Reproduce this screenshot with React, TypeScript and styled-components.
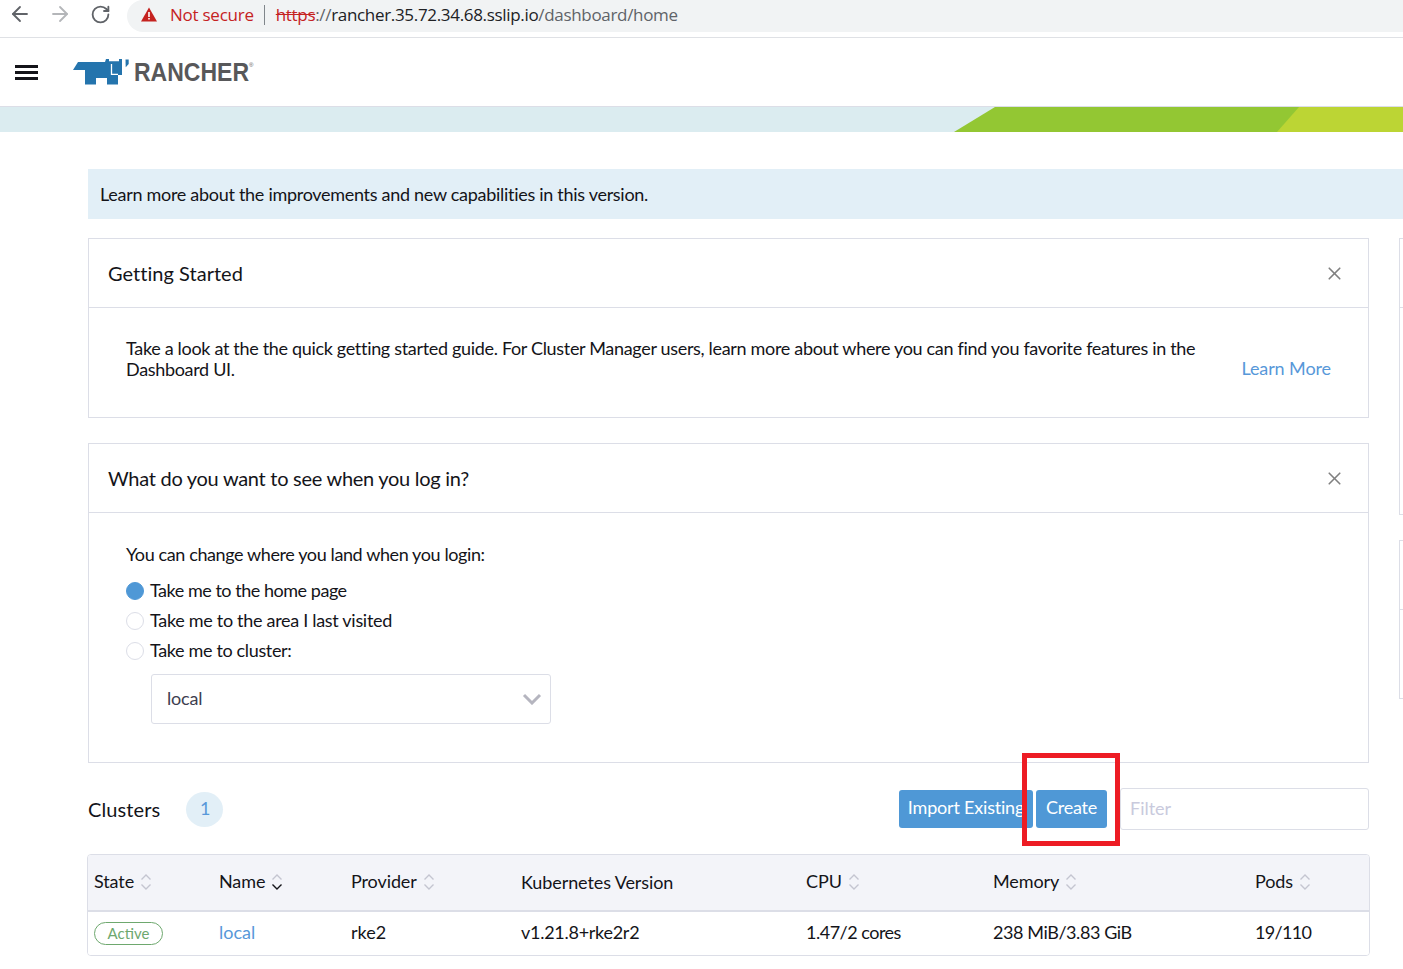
import React from "react";
import styled, { createGlobalStyle } from "styled-components";
import { ArrowLeft, ArrowRight, RotateCw, X } from "lucide-react";

const GlobalStyle = createGlobalStyle`
  html, body {
    margin: 0;
    padding: 0;
    background: #fff;
    overflow: hidden;
  }
  body {
    font-family: Lato, "Open Sans", sans-serif;
    color: #141419;
  }
  * {
    box-sizing: border-box;
  }
`;

const Page = styled.div`
  position: relative;
  width: 1403px;
  height: 969px;
  overflow: hidden;
`;

const BrowserBar = styled.div`
  height: 38px;
  display: flex;
  align-items: flex-start;
  border-bottom: 1px solid #dfe1e5;
  padding-left: 8px;
`;

const NavButton = styled.span<{ $muted?: boolean }>`
  width: 24px;
  height: 28px;
  margin-right: 16px;
  display: flex;
  align-items: center;
  justify-content: center;
  color: ${({ $muted }) => ($muted ? "#b4b6b9" : "#606368")};
`;

const Omnibox = styled.div`
  flex: 1;
  height: 32px;
  margin-left: -1px;
  display: flex;
  align-items: center;
  padding: 0 0 3px 14px;
  background: #f1f3f4;
  border-radius: 16px 0 0 16px;
  font-family: "Open Sans", "Noto Sans", sans-serif;
  font-size: 17px;
  letter-spacing: -0.25px;
  white-space: nowrap;
`;

const NotSecure = styled.span`
  color: #c5221f;
  margin-left: 13px;
`;

const OmniDivider = styled.span`
  width: 1px;
  height: 20px;
  background: #80868b;
  margin: 0 11px 0 10px;
`;

const UrlText = styled.span`
  letter-spacing: -0.32px;
`;

const Scheme = styled.span`
  color: #c5221f;
  text-decoration: line-through;
`;

const Host = styled.span`
  color: #202124;
`;

const UrlPath = styled.span`
  color: #5f6368;
`;

const TopHeader = styled.header`
  height: 69px;
  display: flex;
  align-items: center;
  border-bottom: 1px solid #dcdee7;
  padding-left: 15px;
`;

const Burger = styled.div`
  width: 23px;
  height: 15px;
  margin-right: 35px;
  display: flex;
  flex-direction: column;
  justify-content: space-between;

  span {
    display: block;
    height: 3px;
    background: #141419;
  }
`;

const Logo = styled.div`
  display: flex;
  align-items: center;
  color: #58585a;
`;

const LogoText = styled.span`
  display: inline-block;
  width: 115px;
  margin-left: 3px;
  font-family: "Liberation Sans", Arial, sans-serif;
  font-weight: 700;
  font-size: 26px;
  line-height: 30px;
  white-space: nowrap;
  transform: scaleX(0.885);
  transform-origin: left center;
`;

const LogoMark = styled.sup`
  font-family: "Liberation Sans", Arial, sans-serif;
  font-size: 6px;
  margin: -14px 0 0 0;
`;

const Banner = styled.div`
  position: relative;
  height: 25px;
  background: #dbecf0;
  overflow: hidden;
`;

const BannerShape = styled.div<{ $left: number; $color: string }>`
  position: absolute;
  top: 0;
  bottom: 0;
  right: 0;
  left: ${({ $left }) => $left}px;
  background: ${({ $color }) => $color};
  clip-path: polygon(41px 0, 100% 0, 100% 100%, 0 100%);
`;

const BannerTip = styled(BannerShape)`
  clip-path: polygon(22px 0, 100% 0, 100% 100%, 0 100%);
`;

const Main = styled.main`
  padding: 37px 0 0 88px;
`;

const Notice = styled.div`
  height: 50px;
  display: flex;
  align-items: center;
  padding-left: 12px;
  background: #e2eff7;
  font-size: 18px;
  letter-spacing: -0.29px;
`;

const Columns = styled.div`
  display: flex;
  margin-top: 19px;
  gap: 30px;
`;

const LeftColumn = styled.div`
  flex: none;
  width: 1281px;
`;

const RightColumn = styled.div`
  flex: none;
  width: 100px;
`;

const Card = styled.section<{ $height: number; $gap?: number }>`
  height: ${({ $height }) => $height}px;
  margin-top: ${({ $gap }) => $gap ?? 0}px;
  border: 1px solid #dcdee7;
  display: flex;
  flex-direction: column;
`;

const CardHeader = styled.div<{ $tracking: number }>`
  flex: none;
  height: 69px;
  display: flex;
  align-items: center;
  justify-content: space-between;
  padding: 0 23px 0 19px;
  border-bottom: 1px solid #dcdee7;
  font-size: 20px;
  letter-spacing: ${({ $tracking }) => $tracking}px;
  color: #141419;

  svg {
    color: #808080;
    margin-top: 1px;
  }
`;

const GuideBody = styled.div`
  flex: 1;
  display: flex;
  align-items: center;
  justify-content: space-between;
  padding: 0 37px;
  font-size: 18px;
  letter-spacing: -0.32px;
`;

const GuideText = styled.p`
  margin: 0 0 8px;
  width: 1085px;
  line-height: 21px;
`;

const LearnMore = styled.a`
  color: #5798d9;
  text-decoration: none;
  letter-spacing: -0.1px;
  margin-top: 11px;
`;

const LoginBody = styled.div`
  padding: 31px 37px 0;
  font-size: 18px;
`;

const LoginPrompt = styled.p`
  margin: 0 0 10px;
  line-height: 21px;
  letter-spacing: -0.39px;
`;

const RadioRow = styled.div<{ $tracking: number }>`
  height: 30px;
  display: flex;
  align-items: center;
  gap: 6px;
  letter-spacing: ${({ $tracking }) => $tracking}px;
`;

const RadioDot = styled.span<{ $checked?: boolean }>`
  flex: none;
  width: 18px;
  height: 18px;
  margin-top: 2px;
  border-radius: 50%;
  background: ${({ $checked }) => ($checked ? "#4f98d6" : "#fff")};
  border: 1px solid ${({ $checked }) => ($checked ? "#4f98d6" : "#dcdee7")};
`;

const SelectBox = styled.div`
  width: 400px;
  height: 50px;
  margin: 9px 0 0 25px;
  padding: 0 8px 3px 15px;
  display: flex;
  align-items: center;
  justify-content: space-between;
  border: 1px solid #dcdee7;
  border-radius: 3px;
  color: #3e3e50;
  letter-spacing: -0.2px;

  svg {
    margin-top: 3px;
  }
`;

const SideCard = styled.div<{ $height: number; $head: number; $gap?: number }>`
  height: ${({ $height }) => $height}px;
  margin-top: ${({ $gap }) => $gap ?? 0}px;
  border: 1px solid #dcdee7;
  border-right: none;

  &::before {
    content: "";
    display: block;
    height: ${({ $head }) => $head}px;
    border-bottom: 1px solid #dcdee7;
  }
`;

const ClusterBar = styled.div`
  display: flex;
  align-items: center;
  height: 42px;
  margin-top: 25px;
`;

const ClusterTitle = styled.h2`
  margin: 0 26px 0 0;
  font-size: 20px;
  font-weight: 400;
  letter-spacing: 0.1px;
`;

const CountBadge = styled.span`
  width: 37px;
  height: 35px;
  border-radius: 50%;
  display: flex;
  align-items: center;
  justify-content: center;
  background: #e2eff7;
  color: #5798d9;
  font-size: 18px;
  padding: 0 0 2px 1px;
`;

const BarActions = styled.div`
  margin-left: auto;
  display: flex;
  align-items: center;
`;

const ActionButton = styled.button<{ $width: number; $gap: number }>`
  width: ${({ $width }) => $width}px;
  height: 38px;
  margin-right: ${({ $gap }) => $gap}px;
  padding: 0 0 5px;
  border: none;
  border-radius: 3px;
  background: #4f98d6;
  color: #fff;
  font-family: inherit;
  font-size: 18px;
  letter-spacing: -0.2px;
  white-space: nowrap;
`;

const FilterBox = styled.div`
  width: 249px;
  height: 42px;
  padding: 0 9px 2px;
  display: flex;
  align-items: center;
  border: 1px solid #dcdee7;
  border-radius: 3px;
  color: #c9cadd;
  font-size: 18px;
`;

const Table = styled.div`
  width: 1283px;
  margin: 24px 0 0 -1px;
  border: 1px solid #dcdee7;
  border-radius: 4px;
  overflow: hidden;
`;

const TableRow = styled.div<{ $head?: boolean }>`
  display: grid;
  grid-template-columns: 125px 132px 170px 285px 187px 262px 1fr;
  align-items: center;
  height: ${({ $head }) => ($head ? "57px" : "43px")};
  padding: ${({ $head }) => ($head ? "0 0 4px 6px" : "0 0 3px 6px")};
  font-size: 18px;
  letter-spacing: ${({ $head }) => ($head ? "-0.1px" : "-0.42px")};
  background: ${({ $head }) => ($head ? "#f3f4f9" : "#fff")};
  border-bottom: ${({ $head }) => ($head ? "2px solid #dcdee7" : "none")};
`;

const HeadCell = styled.div<{ $drop?: boolean }>`
  display: flex;
  align-items: center;
  gap: 6px;
  padding-top: ${({ $drop }) => ($drop ? "3px" : "0")};
`;

const BodyCell = styled.div<{ $tracking?: number }>`
  letter-spacing: ${({ $tracking }) => $tracking ?? -0.42}px;
`;

const SortIcon = styled.svg`
  flex: none;
  margin-top: 2px;
`;

const NameLink = styled.a`
  color: #5798d9;
  text-decoration: none;
  letter-spacing: 0;
`;

const StatePill = styled.span`
  display: inline-flex;
  align-items: center;
  justify-content: center;
  width: 69px;
  height: 23px;
  margin-top: 3px;
  padding-bottom: 2px;
  border: 1px solid #6ea86e;
  border-radius: 12px;
  color: #6ea86e;
  font-size: 15px;
  letter-spacing: 0;
`;

const Callout = styled.div`
  position: absolute;
  left: 1022px;
  top: 753px;
  width: 98px;
  height: 93px;
  border: 5px solid #ed1c24;
  pointer-events: none;
`;

const Sort = ({ active }: { active?: boolean }) => (
  <SortIcon width="12" height="18" viewBox="0 0 12 18" fill="none" strokeWidth="1.4">
    <path d="M1.5 6.5 6 2l4.5 4.5" stroke="#c4c5d0" />
    <path d="M1.5 11.5 6 16l4.5-4.5" stroke={active ? "#141419" : "#c4c5d0"} />
  </SortIcon>
);

const RancherMark = () => (
  <svg width="58" height="26" viewBox="0 0 58 26">
    <path
      fill="#2474ad"
      d="M0 11 5 3H32L33 0h3v2.200h10V0h3v16h-4v9.500H34V19H23v6.500H12V11z"
    />
    <path fill="none" stroke="#fff" strokeWidth="1.300" d="M38.500 5v10.300H45" />
    <path fill="#2474ad" d="M52.500 0.500h3.200V5l-3 3.200z" />
  </svg>
);

const App = () => {
  return (
    <Page>
      <GlobalStyle />
      <BrowserBar>
        <NavButton>
          <ArrowLeft size={24} strokeWidth={1.8} />
        </NavButton>
        <NavButton $muted>
          <ArrowRight size={24} strokeWidth={1.8} />
        </NavButton>
        <NavButton>
          <RotateCw size={21} strokeWidth={2.1} />
        </NavButton>
        <Omnibox>
          <svg width="16" height="15" viewBox="0 0 16 15">
            <path fill="#c5221f" d="M8 0.500 16 14.500H0z" />
            <path fill="#fff" d="M7.200 5h1.600v5H7.200zM7.200 11h1.600v1.600H7.200z" />
          </svg>
          <NotSecure>Not secure</NotSecure>
          <OmniDivider />
          <UrlText>
            <Scheme>https</Scheme>
            <UrlPath>://</UrlPath>
            <Host>rancher.35.72.34.68.sslip.io</Host>
            <UrlPath>/dashboard/home</UrlPath>
          </UrlText>
        </Omnibox>
      </BrowserBar>
      <TopHeader>
        <Burger>
          <span />
          <span />
          <span />
        </Burger>
        <Logo>
          <RancherMark />
          <LogoText>RANCHER</LogoText>
          <LogoMark>®</LogoMark>
        </Logo>
      </TopHeader>
      <Banner>
        <BannerShape $left={954} $color="#93c733" />
        <BannerTip $left={1277} $color="#bcd534" />
      </Banner>
      <Main>
        <Notice>Learn more about the improvements and new capabilities in this version.</Notice>
        <Columns>
          <LeftColumn>
            <Card $height={180}>
              <CardHeader $tracking={0.03}>
                Getting Started
                <X size={21} strokeWidth={1.9} />
              </CardHeader>
              <GuideBody>
                <GuideText>
                  Take a look at the the quick getting started guide. For Cluster Manager users, learn more about
                  where you can find you favorite features in the Dashboard UI.
                </GuideText>
                <LearnMore>Learn More</LearnMore>
              </GuideBody>
            </Card>
            <Card $height={320} $gap={25}>
              <CardHeader $tracking={-0.28}>
                What do you want to see when you log in?
                <X size={21} strokeWidth={1.9} />
              </CardHeader>
              <LoginBody>
                <LoginPrompt>You can change where you land when you login:</LoginPrompt>
                <RadioRow $tracking={-0.47}>
                  <RadioDot $checked />
                  Take me to the home page
                </RadioRow>
                <RadioRow $tracking={-0.3}>
                  <RadioDot />
                  Take me to the area I last visited
                </RadioRow>
                <RadioRow $tracking={-0.35}>
                  <RadioDot />
                  Take me to cluster:
                </RadioRow>
                <SelectBox>
                  local
                  <svg width="20" height="12" viewBox="0 0 20 12" fill="none">
                    <path d="M2 2l8 8 8-8" stroke="#b5b5bf" strokeWidth="3" />
                  </svg>
                </SelectBox>
              </LoginBody>
            </Card>
            <ClusterBar>
              <ClusterTitle>Clusters</ClusterTitle>
              <CountBadge>1</CountBadge>
              <BarActions>
                <ActionButton $width={134} $gap={3}>
                  Import Existing
                </ActionButton>
                <ActionButton $width={71} $gap={13}>
                  Create
                </ActionButton>
                <FilterBox>Filter</FilterBox>
              </BarActions>
            </ClusterBar>
            <Table>
              <TableRow $head>
                <HeadCell>
                  State <Sort />
                </HeadCell>
                <HeadCell>
                  Name <Sort active />
                </HeadCell>
                <HeadCell>
                  Provider <Sort />
                </HeadCell>
                <HeadCell $drop>Kubernetes Version</HeadCell>
                <HeadCell>
                  CPU <Sort />
                </HeadCell>
                <HeadCell>
                  Memory <Sort />
                </HeadCell>
                <HeadCell>
                  Pods <Sort />
                </HeadCell>
              </TableRow>
              <TableRow>
                <div>
                  <StatePill>Active</StatePill>
                </div>
                <NameLink>local</NameLink>
                <BodyCell $tracking={0}>rke2</BodyCell>
                <BodyCell $tracking={-0.27}>v1.21.8+rke2r2</BodyCell>
                <BodyCell $tracking={-0.5}>1.47/2 cores</BodyCell>
                <BodyCell>238 MiB/3.83 GiB</BodyCell>
                <BodyCell $tracking={-0.7}>19/110</BodyCell>
              </TableRow>
            </Table>
          </LeftColumn>
          <RightColumn>
            <SideCard $height={277} $head={68} />
            <SideCard $height={159} $head={68} $gap={25} />
          </RightColumn>
        </Columns>
      </Main>
      <Callout />
    </Page>
  );
};

export default App;
